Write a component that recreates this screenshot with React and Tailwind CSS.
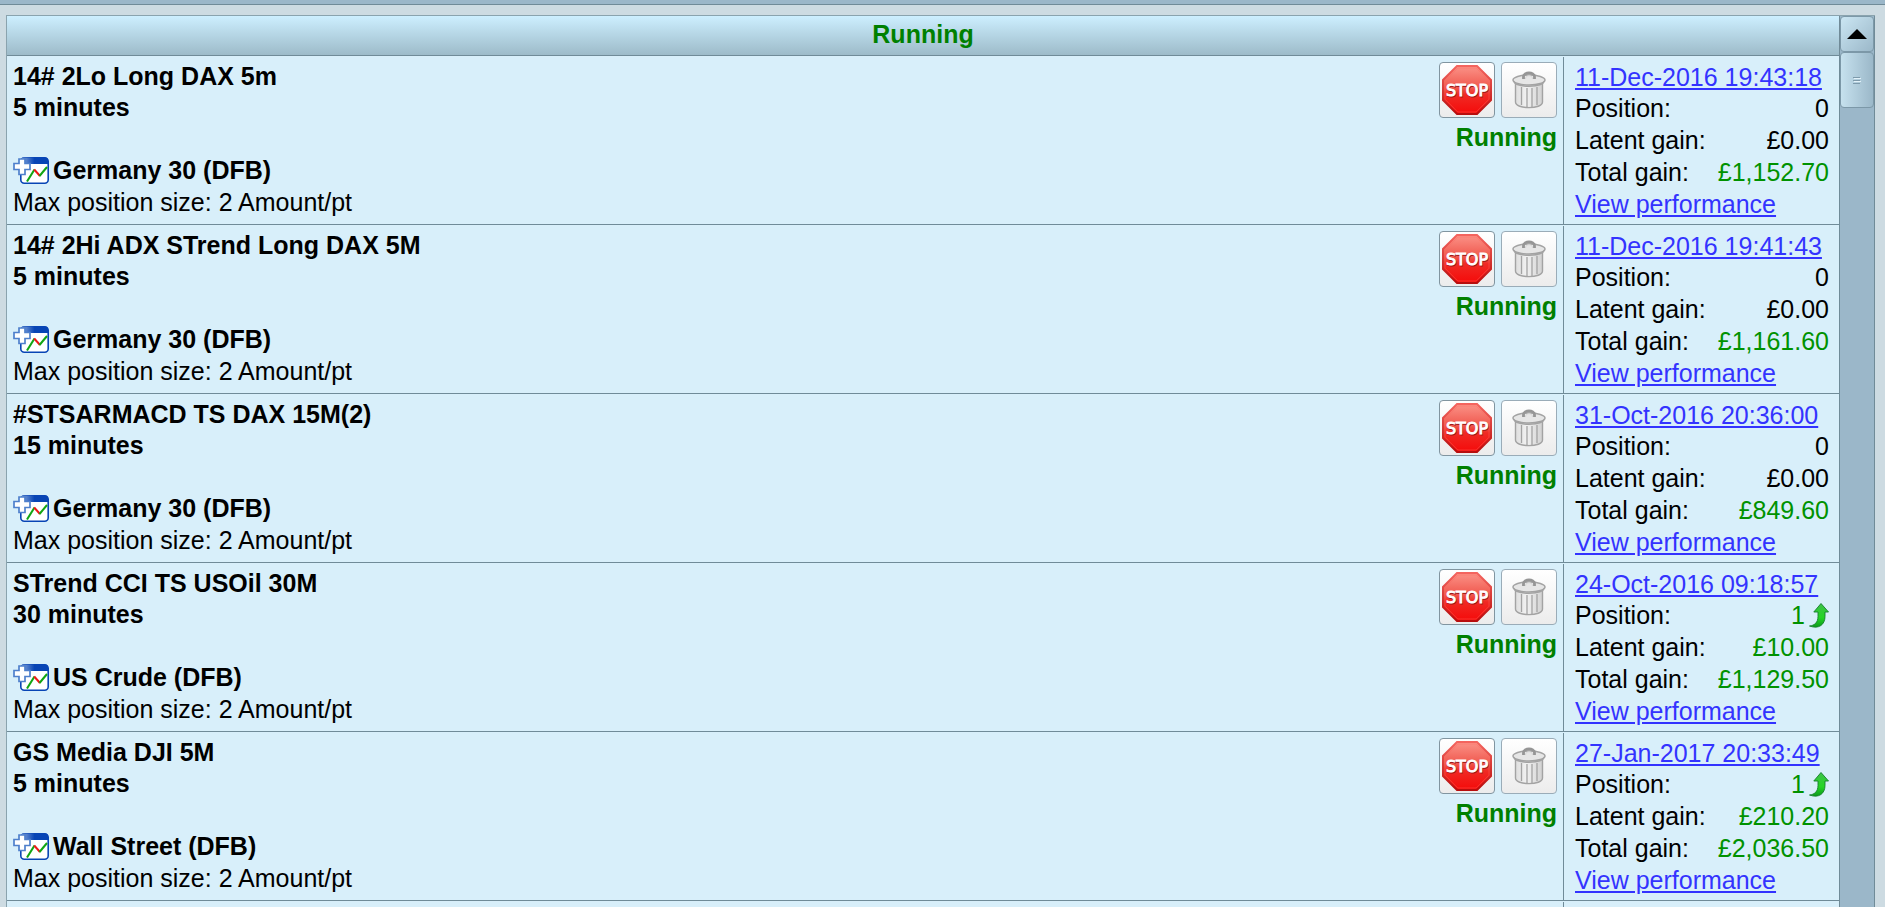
import { useState } from 'react';

const initialSystems = [
    { id: 1, name: '14# 2Lo Long DAX 5m', timeframe: '5 minutes', market: 'Germany 30 (DFB)', started: '11-Dec-2016 19:43:18', position: 0, latent: '£0.00', total: '£1,152.70' },
    { id: 2, name: '14# 2Hi ADX STrend Long DAX 5M', timeframe: '5 minutes', market: 'Germany 30 (DFB)', started: '11-Dec-2016 19:41:43', position: 0, latent: '£0.00', total: '£1,161.60' },
    { id: 3, name: '#STSARMACD TS DAX 15M(2)', timeframe: '15 minutes', market: 'Germany 30 (DFB)', started: '31-Oct-2016 20:36:00', position: 0, latent: '£0.00', total: '£849.60' },
    { id: 4, name: 'STrend CCI TS USOil 30M', timeframe: '30 minutes', market: 'US Crude (DFB)', started: '24-Oct-2016 09:18:57', position: 1, latent: '£10.00', total: '£1,129.50' },
    { id: 5, name: 'GS Media DJI 5M', timeframe: '5 minutes', market: 'Wall Street (DFB)', started: '27-Jan-2017 20:33:49', position: 1, latent: '£210.20', total: '£2,036.50' }
];

function StopIcon() {
    return (
        <svg width="50" height="50" viewBox="0 0 50 50" aria-hidden="true">
            <defs>
                <linearGradient id="stopFill" x1="0" y1="0" x2="0" y2="1">
                    <stop offset="0" stopColor="#fb9388" />
                    <stop offset="0.45" stopColor="#f0584e" />
                    <stop offset="0.6" stopColor="#f02a24" />
                    <stop offset="1" stopColor="#f50a0a" />
                </linearGradient>
                <linearGradient id="stopEdge" x1="0" y1="0" x2="0" y2="1">
                    <stop offset="0" stopColor="#f4655f" />
                    <stop offset="1" stopColor="#b80d0d" />
                </linearGradient>
            </defs>
            <path d="M15 1H35L49 15V35L35 49H15L1 35V15Z" fill="url(#stopFill)" stroke="url(#stopEdge)" strokeWidth="2" />
            <path d="M15.8 3H34.2L47 15.8V34.2L34.2 47H15.8L3 34.2V15.8Z" fill="none" stroke="#ff6a60" strokeOpacity="0.4" />
            <text x="25.5" y="32" textAnchor="middle" fill="#9c1515" stroke="#9c1515" strokeWidth="1" className="font-['DejaVu_Sans',sans-serif] text-[16px]">STOP</text>
            <text x="25" y="31" textAnchor="middle" fill="#fff" stroke="#fff" strokeWidth="0.9" className="font-['DejaVu_Sans',sans-serif] text-[16px]">STOP</text>
        </svg>
    );
}

function TrashIcon() {
    return (
        <svg width="34" height="38" viewBox="0 0 34 38" fill="none" stroke="#a3a3a3" aria-hidden="true">
            <defs>
                <linearGradient id="binBody" x1="0" y1="0" x2="1" y2="0">
                    <stop offset="0" stopColor="#dedede" />
                    <stop offset="0.4" stopColor="#f1f1f1" />
                    <stop offset="1" stopColor="#d2d2d2" />
                </linearGradient>
            </defs>
            <path d="M3.5 12V31C3.5 38.5 30.500 38.5 30.500 31V12" fill="url(#binBody)" strokeWidth="1.4" />
            <path d="M9.500 16V34M15 17V36M20 17V36M25 16V34" strokeWidth="1.3" />
            <ellipse cx="17" cy="9" rx="16" ry="5" fill="#e6e6e6" strokeWidth="1.5" />
            <path d="M1.500 10C4 17 30 17 32.500 10" strokeWidth="1.4" />
            <path d="M11.500 8V5.500C11.500 0.800 22.500 0.800 22.500 5.500V8" stroke="#969696" strokeWidth="2.8" />
            <path d="M13.500 8C13.500 3.500 20.500 3.500 20.500 8" stroke="#d5d5d5" strokeWidth="1" />
        </svg>
    );
}

function ChartIcon() {
    return (
        <svg width="36" height="27" viewBox="0 0 36 27" aria-hidden="true">
            <defs>
                <linearGradient id="chartBar" x1="0" y1="0" x2="1" y2="0">
                    <stop offset="0" stopColor="#8aa9dd" />
                    <stop offset="0.5" stopColor="#0845b5" />
                </linearGradient>
            </defs>
            <rect x="7.8" y="0.8" width="27.4" height="25.4" rx="3.5" fill="#fff" stroke="#0845b5" strokeWidth="1.6" />
            <path d="M8 7V3Q8 0.500 11 0.500H32Q35 0.500 35 3V7Z" fill="url(#chartBar)" />
            <path d="M14 24.500L21.500 12.500" stroke="#12a512" strokeWidth="2" />
            <path d="M21.200 12.500L27 19" stroke="#f01818" strokeWidth="2" />
            <path d="M26.500 19L34 10" stroke="#12a512" strokeWidth="2" />
            <path d="M6 2H12V6.500H17V12.500H12V17.500H6V12.500H1V6.500H6Z" fill="#fff" stroke="#4f80cc" strokeWidth="1.700" />
        </svg>
    );
}

function LongArrow() {
    return (
        <svg width="20" height="25" viewBox="0 0 20 25" role="img" aria-label="Long">
            <defs>
                <linearGradient id="arrowFill" x1="0" y1="0" x2="0" y2="1">
                    <stop offset="0" stopColor="#3fc04a" />
                    <stop offset="0.6" stopColor="#25d625" />
                    <stop offset="1" stopColor="#0c9a1c" />
                </linearGradient>
            </defs>
            <path d="M12 0.500L19.500 9H16V13.500C16 21.500 10 26.500 0.500 23C5.500 22.500 9 19.500 9 13.500V9H4.800Z" fill="url(#arrowFill)" stroke="#14802a" strokeWidth="0.900" />
        </svg>
    );
}

function SystemRow({ system, onStop, onDelete }) {
    const gainColor = system.position > 0 ? 'text-[#009200]' : '';

    return (
        <li className="flex border-b border-[#708b98]">
            <div className="min-w-0 flex-1 pt-[5px] pb-1.5 pl-1.5 leading-[31px]">
                <h2 className="font-bold">{system.name}</h2>
                <p className="font-bold">{system.timeframe}</p>
                <div className="mt-[31px] flex items-center gap-1 leading-8 font-bold">
                    <ChartIcon />
                    <span>{system.market}</span>
                </div>
                <p className="leading-8">Max position size: 2 Amount/pt</p>
            </div>

            <div className="pt-1.5 pr-1.5">
                <div className="flex gap-1.5">
                    <button
                        type="button"
                        aria-label={`Stop ${system.name}`}
                        onClick={() => onStop(system.id)}
                        className="flex size-14 items-center justify-center rounded-sm border border-[#8195a0] bg-linear-to-b from-white to-[#ececec]"
                    >
                        <StopIcon />
                    </button>
                    <button
                        type="button"
                        aria-label={`Delete ${system.name}`}
                        onClick={() => onDelete(system.id)}
                        className="flex size-14 items-center justify-center rounded-sm border border-[#9aacb8] bg-linear-to-b from-white to-[#ececec]"
                    >
                        <TrashIcon />
                    </button>
                </div>
                <p className="mt-1 text-right leading-[31px] font-bold text-[#008000]">Running</p>
            </div>

            <div className="mt-px w-[276px] border-l border-[#708b98] pt-[5px] pr-2.5 pl-[11px] leading-8">
                <a href="#details" className="block leading-[31px] whitespace-nowrap text-[#3333ff] underline">{system.started}</a>
                <dl>
                    <div className="flex justify-between leading-[31px]">
                        <dt>Position:</dt>
                        <dd className={`flex items-center gap-1 ${gainColor}`}>
                            {system.position}
                            {system.position > 0 && <LongArrow />}
                        </dd>
                    </div>
                    <div className="flex justify-between">
                        <dt>Latent gain:</dt>
                        <dd className={gainColor}>{system.latent}</dd>
                    </div>
                    <div className="flex justify-between">
                        <dt>Total gain:</dt>
                        <dd className="text-[#009200]">{system.total}</dd>
                    </div>
                </dl>
                <a href="#performance" className="block text-[#3333ff] underline">View performance</a>
            </div>
        </li>
    );
}

function ScrollBar() {
    return (
        <div className="flex w-9 shrink-0 flex-col border-x border-[#708b98] bg-[#9bb7c9]">
            <button
                type="button"
                aria-label="Scroll up"
                className="flex h-9 items-center justify-center rounded-sm border border-[#7c98a8] bg-linear-to-br from-[#cbe6f3] to-[#9bb8c9]"
            >
                <svg width="20" height="10" viewBox="0 0 20 10" aria-hidden="true">
                    <path d="M10 0L20 10H0Z" fill="#000" />
                </svg>
            </button>
            <div className="flex h-14 items-center justify-center rounded-sm border border-[#7c98a8] bg-linear-to-r from-[#c6e1ee] to-[#9bb8c9]">
                <svg width="8" height="7" viewBox="0 0 8 7" aria-hidden="true">
                    <path d="M0 0.500H7M0 3.500H7M0 6.500H7" stroke="#7d9aab" />
                    <path d="M1 1.500H8M1 4.500H8" stroke="#e2f2fa" />
                </svg>
            </div>
        </div>
    );
}

function App() {
    const [systems, setSystems] = useState(initialSystems);

    const handleStop = (id) => {
        setSystems(prev => prev.filter(system => system.id !== id));
    };

    const handleDelete = (id) => {
        setSystems(prev => prev.filter(system => system.id !== id));
    };

    return (
        <div className="flex h-screen flex-col overflow-hidden bg-[#cddbe2] font-['Liberation_Sans',Arial,sans-serif] text-[25px] text-black">
            <div className="h-[5px] shrink-0 border-b border-[#708b98] bg-[#9bb7c9]" />

            <main className="mt-2.5 mr-2.5 ml-1.5 flex min-h-0 flex-1 border-t border-l border-[#8aa3ae] bg-[#d8effa]">
                <section className="flex min-w-0 flex-1 flex-col">
                    <h1 className="h-10 shrink-0 border-b border-[#708b98] bg-linear-to-b from-[#cdefff] to-[#9dbbc9] text-center leading-9 font-bold text-[#008000]">
                        Running
                    </h1>
                    <ul>
                        {systems.map((system) => (
                            <SystemRow key={system.id} system={system} onStop={handleStop} onDelete={handleDelete} />
                        ))}
                    </ul>
                    <div className="mt-px ml-auto w-[276px] flex-1 border-l border-[#708b98]" />
                </section>
                <ScrollBar />
            </main>
        </div>
    );
}

export default App;
